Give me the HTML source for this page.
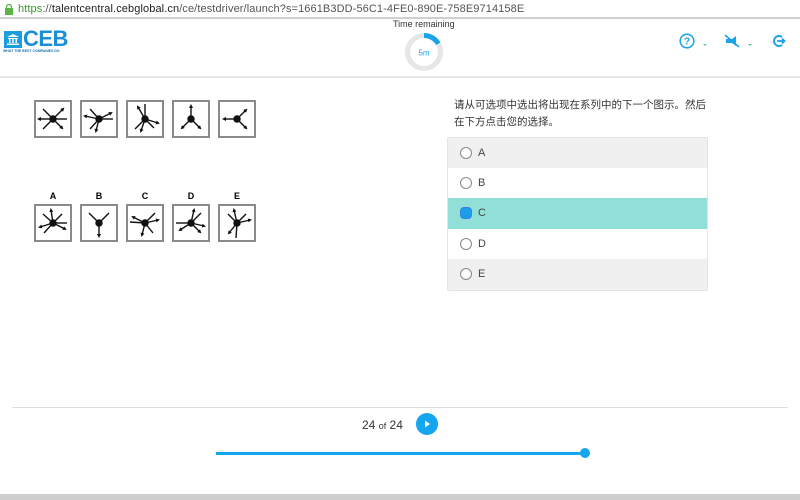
<!DOCTYPE html>
<html><head><meta charset="utf-8"><style>
*{margin:0;padding:0;box-sizing:border-box}
body{width:800px;height:500px;overflow:hidden;background:#fff;font-family:"Liberation Sans","Noto Sans CJK SC",sans-serif;position:relative}
.abs{position:absolute}
.addr{left:0;top:0;width:800px;height:19px;border-bottom:2px solid #cfcfcf;font-size:11px;line-height:18px;color:#555;padding-left:18px;letter-spacing:0.1px}
.box{position:absolute;width:38px;height:38px;border:2px solid #8a8a8a;background:#fff}
.lbl{position:absolute;font-size:9px;font-weight:bold;width:38px;text-align:center}
.opt{position:absolute;left:448px;width:259px;height:30px;font-size:11px;color:#444;line-height:30px;padding-left:30px}
.opt i{position:absolute;left:12px;top:9px;width:12px;height:12px;border:1px solid #888;border-radius:50%;background:#fff}
</style></head><body>
<div class="abs addr"><svg class="abs" style="left:5px;top:4px" width="8" height="11"><rect x="0" y="4" width="8" height="7" fill="#5bb347"/><path d="M1.5 4.5V3a2.5 2.5 0 0 1 5 0v1.5" stroke="#5bb347" fill="none" stroke-width="1.3"/></svg><span style="color:#3a9a2a">https</span>://<span style="color:#222">talentcentral.cebglobal.cn</span>/ce/testdriver/launch?s=1661B3DD-56C1-4FE0-890E-758E9714158E</div>
<div class="abs" style="left:0;top:76px;width:800px;height:2px;background:#e8e8e8"></div>
<!-- logo -->
<div class="abs" style="left:4px;top:31px;width:18px;height:17px;background:#1a9ee0"></div>
<svg class="abs" style="left:6px;top:33px" width="14" height="13"><path d="M1 4L7 1L13 4Z M2 5h10v1H2z M3 6h1.5v4H3z M6.2 6h1.5v4H6.2z M9.5 6H11v4H9.5z M1 10.5h12V12H1z" fill="#fff"/></svg>
<div class="abs" style="left:23px;top:26px;font-size:22px;font-weight:bold;color:#1a8fd8;letter-spacing:-0.5px">CEB</div>
<div class="abs" style="left:3px;top:49px;font-size:3.5px;color:#1a6fb0;font-weight:bold">WHAT THE BEST COMPANIES DO</div>
<!-- timer -->
<div class="abs" style="left:393px;top:19px;font-size:9px;color:#333">Time remaining</div>
<svg class="abs" style="left:404px;top:32px" width="40" height="40"><circle cx="20" cy="20" r="16.5" fill="none" stroke="#e6e6e6" stroke-width="5"/><path d="M20 3.5A16.5 16.5 0 0 1 34.3 11.75" fill="none" stroke="#1aa3e8" stroke-width="5"/><text x="20" y="23.5" font-size="8" text-anchor="middle" fill="#1aa3e8" font-family="Liberation Sans">5m</text></svg>
<!-- icons -->
<svg class="abs" style="left:678px;top:33px" width="120" height="18">
<circle cx="9" cy="8" r="6.8" fill="none" stroke="#1aa3e8" stroke-width="1.5"/><text x="9" y="11.5" font-size="10" text-anchor="middle" fill="#1aa3e8" font-family="Liberation Sans" font-weight="bold">?</text>
<path d="M25 11h4l-2 2z" fill="#6bc0a0"/>
<path d="M48 6l6 0 4-3v10l-4-3h-6z" fill="#1aa3e8"/><path d="M47 2l14 12" stroke="#1aa3e8" stroke-width="1.6"/>
<path d="M70 11h4l-2 2z" fill="#6bc0a0"/>
<path d="M104 4a5 5 0 1 0 0 8" fill="none" stroke="#1aa3e8" stroke-width="2"/><path d="M99 8h7m-2-2.5l2.5 2.5-2.5 2.5" stroke="#1aa3e8" stroke-width="1.8" fill="none"/>
</svg>
<svg width="0" height="0" class="abs"><defs><marker id="a" markerUnits="userSpaceOnUse" markerWidth="4" markerHeight="4" refX="2" refY="2" orient="auto"><path d="M0 0L4 2L0 4z" fill="#111"/></marker></defs></svg>
<!-- figures -->
<div class="box" style="left:34px;top:100px"><svg width="34" height="34" stroke="#111" stroke-width="1.4"><g transform="translate(17,17)"><line x1="0" y1="0" x2="-10" y2="-10"/><line x1="0" y1="0" x2="10" y2="-10" marker-end="url(#a)"/><line x1="0" y1="0" x2="-14" y2="0" marker-end="url(#a)"/><line x1="0" y1="0" x2="14" y2="0"/><line x1="0" y1="0" x2="-10" y2="10"/><line x1="0" y1="0" x2="9" y2="9" marker-end="url(#a)"/><circle r="3" fill="#111"/></g></svg></div>
<div class="box" style="left:80px;top:100px"><svg width="34" height="34" stroke="#111" stroke-width="1.4"><g transform="translate(17,17)"><line x1="0" y1="0" x2="-9" y2="-10"/><line x1="0" y1="0" x2="12" y2="-6" marker-end="url(#a)"/><line x1="0" y1="0" x2="-14" y2="-3" marker-end="url(#a)"/><line x1="0" y1="0" x2="14" y2="0"/><line x1="0" y1="0" x2="-9" y2="10"/><line x1="0" y1="0" x2="-3" y2="12" marker-end="url(#a)"/><circle r="3" fill="#111"/></g></svg></div>
<div class="box" style="left:126px;top:100px"><svg width="34" height="34" stroke="#111" stroke-width="1.4"><g transform="translate(17,17)"><line x1="0" y1="0" x2="0" y2="-15"/><line x1="0" y1="0" x2="-7" y2="-12" marker-end="url(#a)"/><line x1="0" y1="0" x2="13" y2="4" marker-end="url(#a)"/><line x1="0" y1="0" x2="-10" y2="10"/><line x1="0" y1="0" x2="-4" y2="12" marker-end="url(#a)"/><line x1="0" y1="0" x2="9" y2="9"/><circle r="3" fill="#111"/></g></svg></div>
<div class="box" style="left:172px;top:100px"><svg width="34" height="34" stroke="#111" stroke-width="1.4"><g transform="translate(17,17)"><line x1="0" y1="0" x2="0" y2="-13" marker-end="url(#a)"/><line x1="0" y1="0" x2="-9" y2="9" marker-end="url(#a)"/><line x1="0" y1="0" x2="9" y2="9" marker-end="url(#a)"/><circle r="3" fill="#111"/></g></svg></div>
<div class="box" style="left:218px;top:100px"><svg width="34" height="34" stroke="#111" stroke-width="1.4"><g transform="translate(17,17)"><line x1="0" y1="0" x2="-13" y2="0" marker-end="url(#a)"/><line x1="0" y1="0" x2="9" y2="-9" marker-end="url(#a)"/><line x1="0" y1="0" x2="9" y2="9" marker-end="url(#a)"/><circle r="3" fill="#111"/></g></svg></div>
<div class="lbl" style="left:34px;top:191px">A</div><div class="lbl" style="left:80px;top:191px">B</div><div class="lbl" style="left:126px;top:191px">C</div><div class="lbl" style="left:172px;top:191px">D</div><div class="lbl" style="left:218px;top:191px">E</div>
<div class="box" style="left:34px;top:204px"><svg width="34" height="34" stroke="#111" stroke-width="1.4"><g transform="translate(17,17)"><line x1="0" y1="0" x2="-2" y2="-13" marker-end="url(#a)"/><line x1="0" y1="0" x2="-10" y2="-9"/><line x1="0" y1="0" x2="9" y2="-9"/><line x1="0" y1="0" x2="-13" y2="4" marker-end="url(#a)"/><line x1="0" y1="0" x2="14" y2="0"/><line x1="0" y1="0" x2="-9" y2="10"/><line x1="0" y1="0" x2="12" y2="6" marker-end="url(#a)"/><circle r="3" fill="#111"/></g></svg></div>
<div class="box" style="left:80px;top:204px"><svg width="34" height="34" stroke="#111" stroke-width="1.4"><g transform="translate(17,17)"><line x1="0" y1="0" x2="-10" y2="-10"/><line x1="0" y1="0" x2="10" y2="-10"/><line x1="0" y1="0" x2="0" y2="13" marker-end="url(#a)"/><circle r="3" fill="#111"/></g></svg></div>
<div class="box" style="left:126px;top:204px"><svg width="34" height="34" stroke="#111" stroke-width="1.4"><g transform="translate(17,17)"><line x1="0" y1="0" x2="-12" y2="-6" marker-end="url(#a)"/><line x1="0" y1="0" x2="10" y2="-10"/><line x1="0" y1="0" x2="13" y2="-3" marker-end="url(#a)"/><line x1="0" y1="0" x2="-15" y2="-1"/><line x1="0" y1="0" x2="-3" y2="12" marker-end="url(#a)"/><line x1="0" y1="0" x2="8" y2="10"/><circle r="3" fill="#111"/></g></svg></div>
<div class="box" style="left:172px;top:204px"><svg width="34" height="34" stroke="#111" stroke-width="1.4"><g transform="translate(17,17)"><line x1="0" y1="0" x2="3" y2="-13" marker-end="url(#a)"/><line x1="0" y1="0" x2="10" y2="-10"/><line x1="0" y1="0" x2="-15" y2="0"/><line x1="0" y1="0" x2="-11" y2="7" marker-end="url(#a)"/><line x1="0" y1="0" x2="13" y2="3" marker-end="url(#a)"/><line x1="0" y1="0" x2="9" y2="9" marker-end="url(#a)"/><circle r="3" fill="#111"/></g></svg></div>
<div class="box" style="left:218px;top:204px"><svg width="34" height="34" stroke="#111" stroke-width="1.4"><g transform="translate(17,17)"><line x1="0" y1="0" x2="-3" y2="-13" marker-end="url(#a)"/><line x1="0" y1="0" x2="-9" y2="-9"/><line x1="0" y1="0" x2="9" y2="-9"/><line x1="0" y1="0" x2="13" y2="-3" marker-end="url(#a)"/><line x1="0" y1="0" x2="-8" y2="10" marker-end="url(#a)"/><line x1="0" y1="0" x2="-1" y2="15"/><circle r="3" fill="#111"/></g></svg></div>
<!-- question -->
<div class="abs" style="left:454px;top:97px;width:260px;font-size:10.5px;line-height:17px;color:#333">请从可选项中选出将出现在系列中的下一个图示。然后在下方点击您的选择。</div>
<div class="abs" style="left:447px;top:137px;width:261px;height:154px;border:1px solid #e4e4e4;border-radius:2px"></div>
<div class="opt" style="top:138px;background:#f0f0f0"><i></i>A</div>
<div class="opt" style="top:168px;background:#fff"><i></i>B</div>
<div class="opt" style="top:198px;height:31px;background:#91e0d8"><i style="background:#1a9ee8;border:1.5px solid #3c7fe0;border-radius:4px"></i>C</div>
<div class="opt" style="top:229px;background:#fff"><i></i>D</div>
<div class="opt" style="top:259px;background:#f0f0f0;height:31px"><i></i>E</div>
<!-- footer -->
<div class="abs" style="left:12px;top:407px;width:776px;height:1px;background:#ddd"></div>
<div class="abs" style="left:362px;top:418px;font-size:12px;color:#333">24 <span style="font-size:9px">of</span> 24</div>
<div class="abs" style="left:416px;top:413px;width:22px;height:22px;border-radius:50%;background:#14a6ee"></div>
<svg class="abs" style="left:416px;top:413px" width="22" height="22"><path d="M9 7.5L14 11L9 14.5Z" fill="#fff"/></svg>
<div class="abs" style="left:216px;top:452px;width:368px;height:3px;background:#14a6ee"></div>
<div class="abs" style="left:580px;top:448px;width:10px;height:10px;border-radius:50%;background:#14a6ee"></div>
<div class="abs" style="left:0;top:494px;width:800px;height:6px;background:#cfcfcf"></div>
</body></html>
